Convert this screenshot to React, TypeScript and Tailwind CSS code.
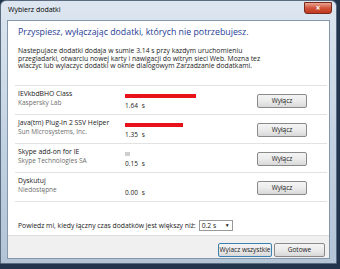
const addons = [
  { name: 'IEVkbdBHO Class', vendor: 'Kaspersky Lab', time: '1.64', bar: 71 },
  { name: 'Java(tm) Plug-In 2 SSV Helper', vendor: 'Sun Microsystems, Inc.', time: '1.35', bar: 58 },
  { name: 'Skype add-on for IE', vendor: 'Skype Technologies SA', time: '0.15', bar: 0 },
  { name: 'Dyskutuj', vendor: 'Niedostępne', time: '0.00', bar: -1 },
];

function WinButton({ label, width, focused }: { label: string; width: string; focused?: boolean }) {
  return (
    <button
      className={`${width} h-[14px] rounded-[2px] border ${
        focused ? 'border-[#3c7fb1]' : 'border-[#8a8a8a]'
      } bg-gradient-to-b from-[#f4f4f4] via-[#ebebeb] to-[#d8d8d8] text-[6.5px] leading-none text-[#1a1a1a] flex items-center justify-center`}
    >
      {label}
    </button>
  );
}

export default function App() {
  return (
    <div className="w-[340px] h-[269px] overflow-hidden bg-[#22344c] font-['Open_Sans',sans-serif]">
      <div className="relative w-[337px] h-[264px] rounded-t-[6px] border border-[#5b6b80] bg-gradient-to-b from-[#dde6f0] via-[#c4d3e3] to-[#b3c4d7] flex flex-col">
        <div className="h-[19px] flex items-center pl-[7px] text-[7px] text-black">Wybierz dodatki</div>
        <div className="absolute right-[4px] top-[1px] w-[28px] h-[12px] rounded-b-[3px] border border-[#7a2a1c] bg-gradient-to-b from-[#e9a392] via-[#d0533a] to-[#c1381f] flex items-center justify-center">
          <span className="text-white text-[8px] font-bold leading-none">×</span>
        </div>
        <div className="mx-[6px] h-[239px] border border-[#8597ab] bg-white flex flex-col">
          <div className="pl-[10px] pt-[5px] text-[8.8px] leading-[12px] text-[#1f3c95]">
            Przyspiesz, wyłączając dodatki, których nie potrzebujesz.
          </div>
          <div className="pl-[10px] mt-[9px] text-[6.8px] leading-[7.7px] text-[#222]">
            <div>Nastepujace dodatki dodaja w sumie 3.14 s przy kazdym uruchomieniu</div>
            <div>przegladarki, otwarciu nowej karty i nawigacji do witryn sieci Web. Mozna tez</div>
            <div>wlaczyc lub wylaczyc dodatki w oknie dialogowym Zarzadzanie dodatkami.</div>
          </div>
          <div className="mt-[15px] ml-[7px] mr-[2px] border-b border-[#e2e2e2]">
            {addons.map((a) => (
              <div key={a.name} className="h-[29px] border-t border-[#e2e2e2] flex">
                <div className="w-[110px] pl-[3px] pt-[4px] flex flex-col">
                  <span className="text-[6.8px] leading-[8px] text-[#1a1a1a]">{a.name}</span>
                  <span className="text-[6.5px] leading-[9px] text-[#6e6e6e]">{a.vendor}</span>
                </div>
                <div className="w-[132px] pt-[7px] flex flex-col">
                  <div className="h-[5px] flex items-center">
                    {a.bar > 0 && <div className="h-[4px] bg-[#e8121b]" style={{ width: a.bar }} />}
                    {a.bar === 0 && <div className="w-[5px] h-[4px] bg-[#cfcfcf]" />}
                  </div>
                  <div className="mt-[4px] text-[6.5px] leading-[8px] text-[#1a1a1a] flex gap-[4px]">
                    <span>{a.time}</span>
                    <span>s</span>
                  </div>
                </div>
                <div className="pt-[8px]">
                  <WinButton label="Wyłącz" width="w-[50px]" />
                </div>
              </div>
            ))}
          </div>
          <div className="mt-[18px] pl-[10px] h-[11px] flex items-center gap-[3px] text-[6.8px] text-[#1a1a1a]">
            <span>Powiedz mi, kiedy łączny czas dodatków jest większy niż:</span>
            <div className="w-[34px] h-[11px] border border-[#9a9a9a] bg-white flex items-center justify-between px-[2px]">
              <span>0.2 s</span>
              <span className="text-[5px]">▼</span>
            </div>
          </div>
          <div className="mt-auto h-[23px] border-t border-[#dcdcdc] bg-[#f0f0f0] flex items-start justify-end gap-[2px] pt-[7px] pr-[4px]">
            <WinButton label="Wylacz wszystkie" width="w-[54px]" focused />
            <WinButton label="Gotowe" width="w-[51px]" />
          </div>
        </div>
      </div>
    </div>
  );
}
